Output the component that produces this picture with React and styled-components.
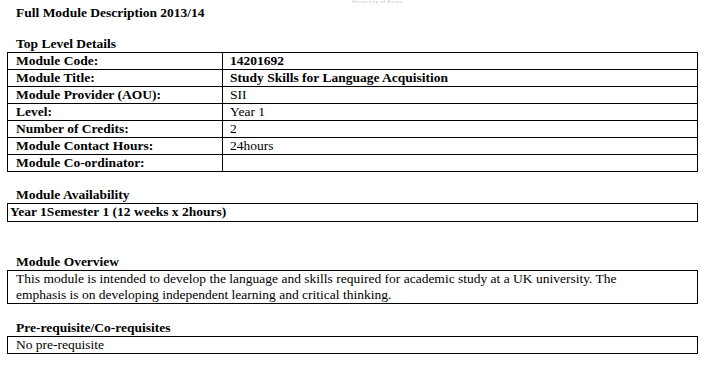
import styled, { createGlobalStyle } from "styled-components"

const GlobalStyle = createGlobalStyle`
    html, body {
        margin: 0;
        padding: 0;
        background: #ffffff;
    }
    body {
        font-family: "Liberation Serif", "Times New Roman", serif;
        color: #000000;
    }
`

const details = [
    { label: "Module Code:", value: "14201692", strong: true },
    { label: "Module Title:", value: "Study Skills for Language Acquisition", strong: true },
    { label: "Module Provider (AOU):", value: "SII" },
    { label: "Level:", value: "Year 1" },
    { label: "Number of Credits:", value: "2" },
    { label: "Module Contact Hours:", value: "24hours" },
    { label: "Module Co-ordinator:", value: "" },
]

export default function App() {
    return (
        <>
            <GlobalStyle />
            <Page>
                <Stamp>
                    <span>University of Essex</span>
                </Stamp>
                <Title>Full Module Description 2013/14</Title>

                <Heading top={16}>Top Level Details</Heading>
                <DetailsTable>
                    <tbody>
                        {details.map((d) => (
                            <tr key={d.label}>
                                <Label>{d.label}</Label>
                                <Value strong={d.strong}>{d.value}</Value>
                            </tr>
                        ))}
                    </tbody>
                </DetailsTable>

                <Heading top={15}>Module Availability</Heading>
                <Box bold>Year 1Semester 1 (12 weeks x 2hours)</Box>

                <Heading top={32}>Module Overview</Heading>
                <Box indent={8}>
                    This module is intended to develop the language and skills required for academic study at a UK university. The
                    <br />
                    emphasis is on developing independent learning and critical thinking.
                </Box>

                <Heading top={16}>Pre-requisite/Co-requisites</Heading>
                <Box indent={8} short>No pre-requisite</Box>
            </Page>
        </>
    )
}

const Page = styled.div`
    width: 707px;
    height: 365px;
    padding: 0 9px 0 7px;
    box-sizing: border-box;
    overflow: hidden;
    display: flex;
    flex-direction: column;
`

const Stamp = styled.div`
    height: 5px;
    padding-left: 345px;
    span {
        display: block;
        font-family: "Liberation Sans", Arial, sans-serif;
        font-size: 4px;
        line-height: 4px;
        letter-spacing: 0.9px;
        color: #8a9dc2;
        opacity: 0.75;
    }
`

const Title = styled.div`
    font-size: 13.5px;
    font-weight: bold;
    line-height: 15px;
    padding-left: 9px;
`

const Heading = styled.div`
    margin-top: ${(p) => p.top}px;
    margin-bottom: 1px;
    font-size: 13.5px;
    font-weight: bold;
    line-height: 15px;
    padding-left: 9px;
`

const DetailsTable = styled.table`
    width: 691px;
    border-collapse: collapse;
    table-layout: fixed;
    font-size: 13.5px;
    td {
        border: 1px solid #000000;
        height: 16px;
        padding: 0;
        line-height: 16px;
        white-space: nowrap;
    }
`

const Label = styled.td`
    width: 206px;
    padding-left: 8px !important;
    font-weight: bold;
`

const Value = styled.td`
    padding-left: 7px !important;
    font-weight: ${(p) => (p.strong ? "bold" : "normal")};
`

const Box = styled.div`
    width: 691px;
    box-sizing: border-box;
    border: 1px solid #000000;
    padding: 0 0 0 ${(p) => p.indent ?? 2}px;
    font-size: 13.5px;
    line-height: 16px;
    min-height: ${(p) => (p.short ? 18 : 19)}px;
    font-weight: ${(p) => (p.bold ? "bold" : "normal")};
`
